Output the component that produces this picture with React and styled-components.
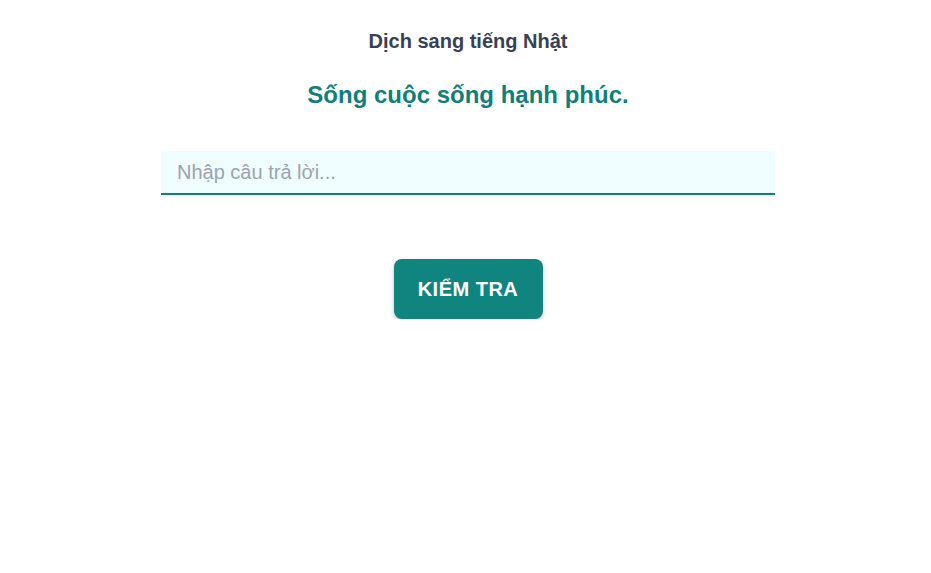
import React from "react";
import styled, { createGlobalStyle } from "styled-components";

const Global = createGlobalStyle`
  html, body { margin: 0; padding: 0; background: #ffffff; }
  body { font-family: "Liberation Sans", Arial, sans-serif; }
`;

const Page = styled.div`
  display: flex;
  justify-content: flex-start;
  padding-left: 161px;
  padding-top: 28px;
`;

const Column = styled.div`
  width: 614px;
  display: flex;
  flex-direction: column;
  align-items: center;
`;

const Title = styled.h2`
  margin: 0;
  font-size: 20px;
  font-weight: 700;
  color: #374151;
  line-height: 26px;
`;

const Sentence = styled.h1`
  margin: 26px 0 0;
  font-size: 24px;
  font-weight: 700;
  color: #0f7f79;
  line-height: 30px;
`;

const Input = styled.input`
  box-sizing: border-box;
  margin-top: 41px;
  width: 100%;
  height: 44px;
  padding: 0 16px;
  border: none;
  border-bottom: 2px solid #0f7f79;
  background: #f0fdff;
  font-family: "Liberation Sans", Arial, sans-serif;
  font-size: 20px;
  color: #1f2937;
  outline: none;
  &::placeholder { color: #9ca3af; }
`;

const Button = styled.button`
  margin-top: 64px;
  width: 149px;
  height: 60px;
  border: none;
  border-radius: 8px;
  background: #10847f;
  color: #ffffff;
  font-family: "Liberation Sans", Arial, sans-serif;
  font-size: 20px;
  font-weight: 700;
  letter-spacing: 0.5px;
  box-shadow: 0 2px 4px rgba(0, 0, 0, 0.25);
  cursor: pointer;
`;

export default function App() {
  return (
    <>
      <Global />
      <Page>
        <Column>
          <Title>Dịch sang tiếng Nhật</Title>
          <Sentence>Sống cuộc sống hạnh phúc.</Sentence>
          <Input placeholder="Nhập câu trả lời..." autoFocus />
          <Button>KIỂM TRA</Button>
        </Column>
      </Page>
    </>
  );
}
